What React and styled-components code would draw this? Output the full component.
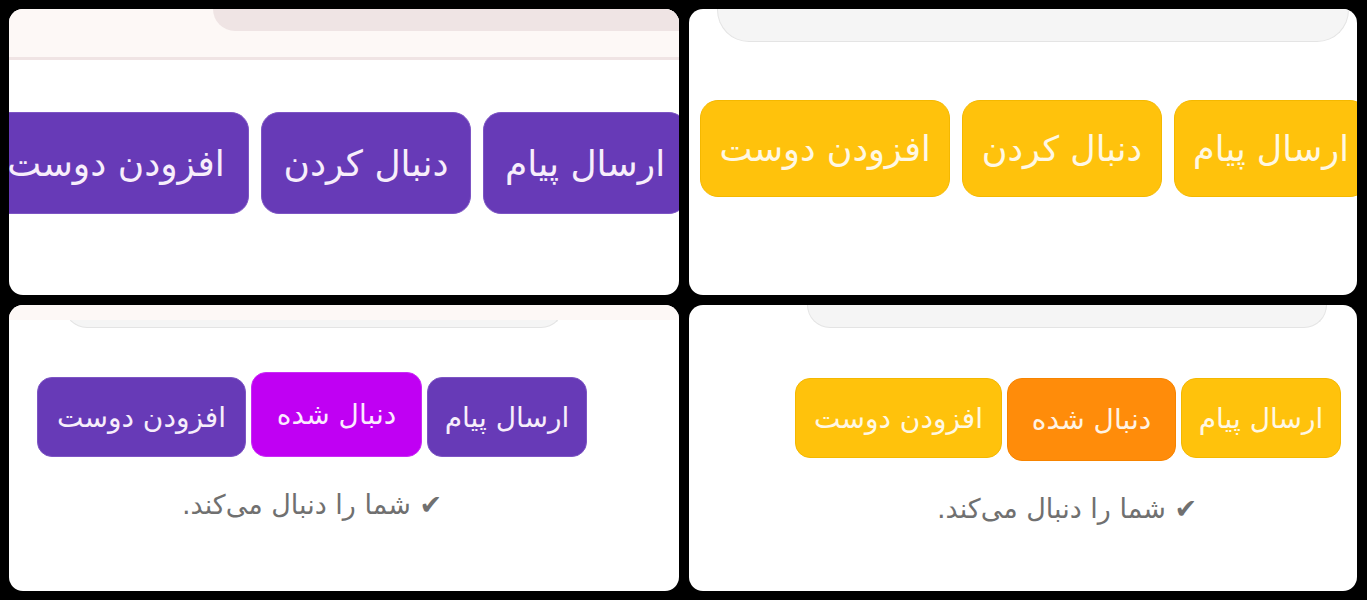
import React from 'react';
import styled, { createGlobalStyle } from 'styled-components';

const GlobalStyle = createGlobalStyle`
  html, body {
    margin: 0;
    padding: 0;
    background: #000;
  }
  body {
    font-family: "DejaVu Sans", "Noto Sans", sans-serif;
  }
`;

const purple = { bg: '#673ab7', fg: '#f7eefb', edge: '#7d55c4' };
const magenta = { bg: '#c000f3', fg: '#fbe9ff', edge: '#c92cf5' };
const amber = { bg: '#ffc20c', fg: '#fff8e4', edge: '#f4b800' };
const orange = { bg: '#ff8c0a', fg: '#fff3e4', edge: '#f78400' };

const panels = [
  {
    top: 'band',
    rowTop: 52,
    gap: 12,
    right: -8,
    h: 102,
    fs: 36,
    radius: 18,
    buttons: [
      { label: 'ارسال پیام', w: 204, tone: purple },
      { label: 'دنبال کردن', w: 210, tone: purple },
      { label: 'افزودن دوست', w: 266, tone: purple },
    ],
  },
  {
    top: 'pill',
    pill: { left: 28, right: 8, height: 33, radius: 32 },
    rowTop: 58,
    gap: 12,
    right: -11,
    h: 97,
    fs: 35,
    radius: 18,
    buttons: [
      { label: 'ارسال پیام', w: 194, tone: amber },
      { label: 'دنبال کردن', w: 200, tone: amber },
      { label: 'افزودن دوست', w: 250, tone: amber },
    ],
  },
  {
    top: 'pill',
    strip: true,
    pill: { left: 55, right: 115, height: 23, radius: 30 },
    rowTop: 44,
    gap: 5,
    right: 92,
    left: 28,
    align: 'flex-end',
    h: 80,
    fs: 28,
    radius: 15,
    caption: '✔ شما را دنبال می‌کند.',
    buttons: [
      { label: 'ارسال پیام', w: 160, tone: purple },
      { label: 'دنبال شده', w: 171, h: 85, tone: magenta },
      { label: 'افزودن دوست', w: 209, tone: purple },
    ],
  },
  {
    top: 'pill',
    pill: { left: 118, right: 30, height: 23, radius: 30 },
    rowTop: 50,
    gap: 5,
    right: 16,
    left: 104,
    align: 'flex-start',
    h: 80,
    fs: 28,
    radius: 15,
    caption: '✔ شما را دنبال می‌کند.',
    buttons: [
      { label: 'ارسال پیام', w: 160, tone: amber },
      { label: 'دنبال شده', w: 169, h: 83, tone: orange },
      { label: 'افزودن دوست', w: 207, tone: amber },
    ],
  },
];

const App = () => {
  return (
    <>
      <GlobalStyle />
      <Board>
        {panels.map((p, i) => (
          <Panel key={i}>
            {p.top === 'band' ? (
              <TopBand>
                <BandTab />
              </TopBand>
            ) : (
              <Pill $left={p.pill.left} $right={p.pill.right} $h={p.pill.height} $r={p.pill.radius} />
            )}
            {p.strip && <Strip />}
            <Content $top={p.rowTop} $right={p.right} $left={p.left || 0}>
              <ButtonRow $gap={p.gap} $align={p.align || 'center'}>
                {p.buttons.map((b) => (
                  <ActionButton
                    key={b.label}
                    $w={b.w}
                    $h={b.h || p.h}
                    $fs={p.fs}
                    $r={p.radius}
                    $bg={b.tone.bg}
                    $fg={b.tone.fg}
                    $edge={b.tone.edge}
                  >
                    {b.label}
                  </ActionButton>
                ))}
              </ButtonRow>
              {p.caption && <Caption>{p.caption}</Caption>}
            </Content>
          </Panel>
        ))}
      </Board>
    </>
  );
};

export default App;

export const Board = styled.div`
  display: grid;
  grid-template-columns: 670px 668px;
  grid-template-rows: 286px 286px;
  gap: 10px;
  padding: 9px;
  width: 1367px;
  height: 600px;
  box-sizing: border-box;
  background: #000;
`;

export const Panel = styled.section`
  position: relative;
  display: flex;
  flex-direction: column;
  background: #fff;
  border-radius: 14px;
  overflow: hidden;
`;

export const TopBand = styled.div`
  display: flex;
  justify-content: flex-end;
  height: 48px;
  background: #fdf8f6;
  border-bottom: 3px solid #f0e4e4;
  flex-shrink: 0;
`;

export const BandTab = styled.div`
  width: 466px;
  height: 22px;
  background: #efe4e4;
  border-bottom-left-radius: 28px;
`;

export const Pill = styled.div`
  flex-shrink: 0;
  height: ${(p) => p.$h}px;
  margin: 0 ${(p) => p.$right}px 0 ${(p) => p.$left}px;
  box-sizing: border-box;
  background: #f5f5f5;
  border: 1px solid #e4e4e4;
  border-top: none;
  border-radius: 0 0 ${(p) => p.$r}px ${(p) => p.$r}px;
`;

export const Strip = styled.div`
  position: absolute;
  top: 0;
  left: 0;
  right: 0;
  height: 15px;
  background: #fdf8f6;
`;

export const Content = styled.div`
  display: flex;
  flex-direction: column;
  margin: ${(p) => p.$top}px ${(p) => p.$right}px 0 ${(p) => p.$left}px;
`;

export const ButtonRow = styled.div`
  direction: rtl;
  display: flex;
  align-items: ${(p) => p.$align};
  gap: ${(p) => p.$gap}px;
`;

export const ActionButton = styled.button`
  flex-shrink: 0;
  display: flex;
  align-items: center;
  justify-content: center;
  width: ${(p) => p.$w}px;
  height: ${(p) => p.$h}px;
  padding: 0;
  box-sizing: border-box;
  background: ${(p) => p.$bg};
  color: ${(p) => p.$fg};
  border: 1px solid ${(p) => p.$edge};
  border-radius: ${(p) => p.$r}px;
  font-family: "DejaVu Sans", sans-serif;
  font-size: ${(p) => p.$fs}px;
  white-space: nowrap;
  cursor: pointer;
`;

export const Caption = styled.p`
  direction: rtl;
  margin: 32px 0 0;
  text-align: center;
  color: #707070;
  font-family: "DejaVu Sans", sans-serif;
  font-size: 27px;
  line-height: 32px;
`;
